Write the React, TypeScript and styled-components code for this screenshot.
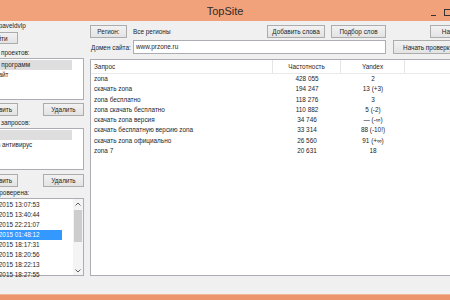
import React from "react";
import styled, { createGlobalStyle } from "styled-components";

const Global = createGlobalStyle`
  html, body { margin: 0; padding: 0; background: #f0f0f0; }
  body { width: 450px; height: 300px; overflow: hidden; font-family: "Liberation Sans", Arial, sans-serif; }
  #root { width: 450px; height: 300px; overflow: hidden; }
`;

const Viewport = styled.div`
  width: 450px;
  height: 300px;
  overflow: hidden;
`;

const Window = styled.div`
  margin-left: -22px;
  width: 560px;
  height: 300px;
  display: flex;
  flex-direction: column;
  background: #f0f0f0;
  font-size: 6.4px;
  color: #1e1e1e;
`;

const TitleBar = styled.div`
  height: 21px;
  flex: none;
  background: #f2a27b;
  display: flex;
  align-items: center;
`;

const Title = styled.div`
  width: 494px;
  text-align: center;
  font-size: 11px;
  color: #2b2b2b;
  padding-top: 1px;
`;

const WinButtons = styled.div`
  display: flex;
  align-items: center;
  gap: 8px;
  margin-left: -41px;
  padding-top: 3px;
`;

const MinGlyph = styled.div`
  width: 5px;
  height: 1px;
  background: #333;
  margin-top: 6px;
`;

const MaxGlyph = styled.div`
  width: 5px;
  height: 5px;
  border: 1px solid #333;
`;

const Body = styled.div`
  flex: 1;
  display: flex;
  gap: 6px;
  padding: 0 0 18px 0;
  min-height: 0;
`;

const LeftCol = styled.div`
  width: 106px;
  flex: none;
  display: flex;
  flex-direction: column;
`;

const RightCol = styled.div`
  flex: 1;
  display: flex;
  flex-direction: column;
  min-width: 0;
`;

const Text = styled.div<{ $mt?: number }>`
  height: 10px;
  line-height: 10px;
  margin-top: ${(p) => p.$mt ?? 0}px;
  white-space: nowrap;
`;

const Button = styled.button<{ $w: number; $h?: number }>`
  width: ${(p) => p.$w}px;
  height: ${(p) => p.$h ?? 13}px;
  flex: none;
  padding: 0;
  font-family: inherit;
  font-size: 6.4px;
  color: #1e1e1e;
  background: linear-gradient(#f2f2f2, #e3e3e3);
  border: 1px solid #acacac;
  white-space: nowrap;
  overflow: hidden;
`;

const ButtonRow = styled.div<{ $mt: number }>`
  display: flex;
  justify-content: space-between;
  margin-top: ${(p) => p.$mt}px;
`;

const ListBox = styled.div<{ $h?: number }>`
  ${(p) => (p.$h ? `height: ${p.$h}px; flex: none;` : "flex: 1;")}
  background: #fff;
  border: 1px solid #abadb3;
  display: flex;
  min-height: 0;
`;

const ListItems = styled.div`
  flex: 1;
  display: flex;
  flex-direction: column;
  padding-top: 1px;
`;

const Item = styled.div<{ $sel?: "gray" | "blue" }>`
  height: 10px;
  line-height: 10px;
  padding-left: 2px;
  margin-right: 11px;
  white-space: nowrap;
  background: ${(p) => (p.$sel === "gray" ? "#dedede" : p.$sel === "blue" ? "#3399ff" : "transparent")};
  color: ${(p) => (p.$sel === "blue" ? "#fff" : "inherit")};
`;

const ScrollBar = styled.div`
  width: 10px;
  flex: none;
  display: flex;
  flex-direction: column;
  align-items: center;
  background: #f4f4f4;
`;

const Arrow = styled.div`
  height: 9px;
  display: flex;
  align-items: center;
  justify-content: center;
`;

const Thumb = styled.div`
  width: 8px;
  height: 32px;
  background: #cdcdcd;
  margin-top: 2px;
`;

const ScrollSpace = styled.div`
  flex: 1;
`;

const Toolbar = styled.div<{ $mt: number }>`
  display: flex;
  align-items: center;
  margin-top: ${(p) => p.$mt}px;
  height: 14px;
`;

const Inline = styled.span<{ $ml: number; $w?: number }>`
  margin-left: ${(p) => p.$ml}px;
  ${(p) => (p.$w ? `width: ${p.$w}px; flex: none;` : "")}
  white-space: nowrap;
`;

const Spacer = styled.div<{ $w: number }>`
  width: ${(p) => p.$w}px;
  flex: none;
`;

const Input = styled.div`
  width: 249px;
  height: 12px;
  line-height: 12px;
  background: #fff;
  border: 1px solid #abadb3;
  padding-left: 2px;
  flex: none;
`;

const Table = styled.div`
  margin-top: 5px;
  flex: 1;
  background: #fff;
  border: 1px solid #abadb3;
  display: flex;
  flex-direction: column;
`;

const Cols = "182px 68px 64px 1fr";

const HeadRow = styled.div`
  display: grid;
  grid-template-columns: ${Cols};
  height: 13px;
  border-bottom: 1px solid #eaeaea;
  flex: none;
`;

const HeadCell = styled.div<{ $center?: boolean }>`
  line-height: 13px;
  padding-left: ${(p) => (p.$center ? 0 : 3)}px;
  text-align: ${(p) => (p.$center ? "center" : "left")};
  border-right: 1px solid #e5e5e5;
`;

const Row = styled.div`
  display: grid;
  grid-template-columns: ${Cols};
  height: 10.3px;
  line-height: 10px;
`;

const Cell = styled.div<{ $center?: boolean }>`
  padding-left: ${(p) => (p.$center ? 0 : 3)}px;
  text-align: ${(p) => (p.$center ? "center" : "left")};
  white-space: nowrap;
`;

const BottomBorder = styled.div`
  height: 5px;
  flex: none;
  background: #ec956c;
  border-top: 1px solid #f2b699;
`;

const rows: [string, string, string][] = [
  ["zona", "428 055", "2"],
  ["скачать zona", "194 247", "13 (+3)"],
  ["zona бесплатно", "118 276", "3"],
  ["zona скачать бесплатно", "110 882", "5 (-2)"],
  ["скачать zona версия", "34 746", "— (-∞)"],
  ["скачать бесплатную версию zona", "33 314", "88 (-10!)"],
  ["скачать zona официально", "26 560", "91 (+∞)"],
  ["zona 7", "20 631", "18"],
];

const dates = [
  "12.03.2015 13:07:53",
  "12.03.2015 13:40:44",
  "12.03.2015 22:21:07",
  "13.03.2015 01:48:12",
  "13.03.2015 18:17:31",
  "13.03.2015 18:20:56",
  "13.03.2015 18:22:13",
  "13.03.2015 18:27:55",
];

export default function App() {
  return (
    <Viewport>
      <Global />
      <Window>
        <TitleBar>
          <Title>TopSite</Title>
          <WinButtons>
            <MinGlyph />
            <MaxGlyph />
          </WinButtons>
        </TitleBar>
        <Body>
          <LeftCol>
            <Text>Логин: paveldvlp</Text>
            <ButtonRow $mt={1}>
              <Button $w={40} $h={12}>Выйти</Button>
            </ButtonRow>
            <Text $mt={4}>Список проектов:</Text>
            <ListBox $h={40}>
              <ListItems>
                <Item $sel="gray">Zona - программ</Item>
                <Item>Мой сайт</Item>
              </ListItems>
            </ListBox>
            <ButtonRow $mt={3}>
              <Button $w={40}>Добавить</Button>
              <Button $w={41}>Удалить</Button>
            </ButtonRow>
            <Text $mt={2}>Список запросов:</Text>
            <ListBox $h={40}>
              <ListItems>
                <Item $sel="gray">&nbsp;</Item>
                <Item>Norton антивирус</Item>
              </ListItems>
            </ListBox>
            <ButtonRow $mt={4}>
              <Button $w={40}>Добавить</Button>
              <Button $w={41}>Удалить</Button>
            </ButtonRow>
            <Text $mt={1}>Была проверена:</Text>
            <ListBox>
              <ListItems>
                {dates.map((d, i) => (
                  <Item key={d} $sel={i === 3 ? "blue" : undefined}>
                    {d}
                  </Item>
                ))}
              </ListItems>
              <ScrollBar>
                <Arrow>
                  <svg width="6" height="4" viewBox="0 0 6 4">
                    <path d="M0.5 3.5 L3 1 L5.5 3.5" stroke="#606060" fill="none" strokeWidth="1" />
                  </svg>
                </Arrow>
                <Thumb />
                <ScrollSpace />
                <Arrow>
                  <svg width="6" height="4" viewBox="0 0 6 4">
                    <path d="M0.5 0.5 L3 3 L5.5 0.5" stroke="#606060" fill="none" strokeWidth="1" />
                  </svg>
                </Arrow>
              </ScrollBar>
            </ListBox>
          </LeftCol>
          <RightCol>
            <Toolbar $mt={3}>
              <Button $w={37}>Регион:</Button>
              <Inline $ml={6} $w={134}>Все регионы</Inline>
              <Button $w={58}>Добавить слова</Button>
              <Spacer $w={6} />
              <Button $w={55}>Подбор слов</Button>
              <Spacer $w={44} />
              <Button $w={55}>Настройки</Button>
            </Toolbar>
            <Toolbar $mt={2}>
              <Inline $ml={1} $w={42}>Домен сайта:</Inline>
              <Input>www.przone.ru</Input>
              <Spacer $w={7} />
              <Button $w={70} $h={14}>Начать проверку</Button>
            </Toolbar>
            <Table>
              <HeadRow>
                <HeadCell>Запрос</HeadCell>
                <HeadCell $center>Частотность</HeadCell>
                <HeadCell $center>Yandex</HeadCell>
                <HeadCell />
              </HeadRow>
              {rows.map((r) => (
                <Row key={r[0]}>
                  <Cell>{r[0]}</Cell>
                  <Cell $center>{r[1]}</Cell>
                  <Cell $center>{r[2]}</Cell>
                  <Cell />
                </Row>
              ))}
            </Table>
          </RightCol>
        </Body>
        <BottomBorder />
      </Window>
    </Viewport>
  );
}
